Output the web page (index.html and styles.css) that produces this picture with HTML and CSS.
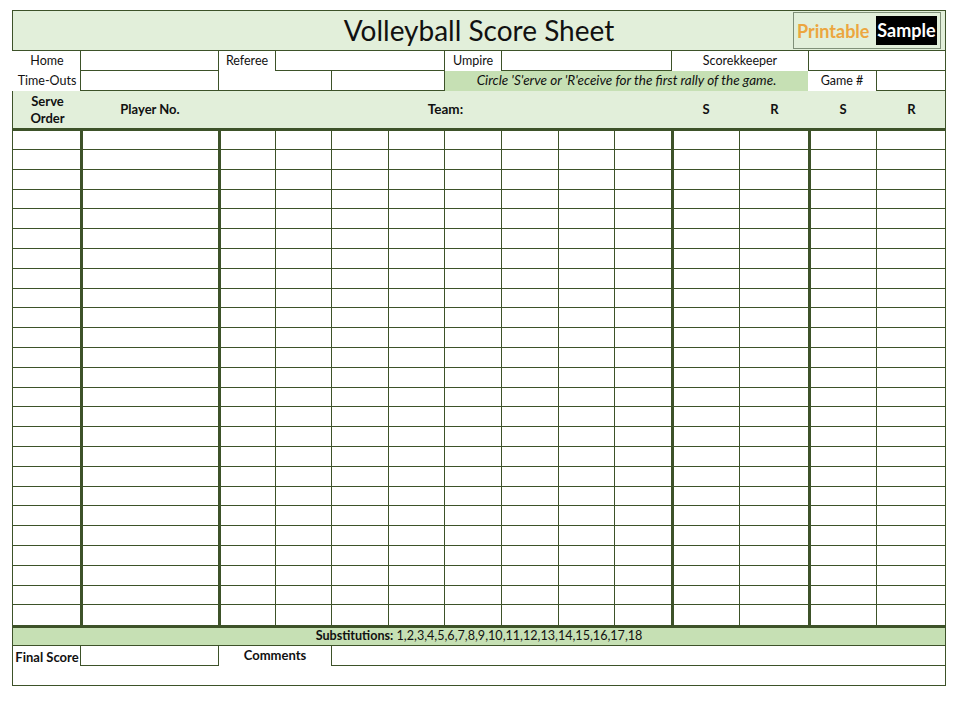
FILE: index.html
```html
<!DOCTYPE html>
<html lang="en">
<head>
<meta charset="utf-8">
<title>Volleyball Score Sheet</title>
<link rel="stylesheet" href="styles.css">
</head>
<body>
<main class="sheet">
  <header class="title">
    <h1>Volleyball Score Sheet</h1>
    <div class="logo"><span class="logo-a">Printable</span><span class="logo-b">Sample</span></div>
  </header>

  <section class="grid info">
    <div class="label first">Home</div><div class="box"></div>
    <div class="label lb">Referee</div><div class="box s3"></div>
    <div class="label lb">Umpire</div><div class="box s3"></div>
    <div class="label s2 lb">Scorekkeeper</div><div class="box s2"></div>
    <div class="label first">Time-Outs</div><div class="box"></div>
    <div class="box s2"></div><div class="box s2"></div>
    <div class="note s6">Circle 'S'erve or 'R'eceive for the first rally of the game.</div>
    <div class="label">Game #</div><div class="box"></div>
  </section>

  <section class="grid head">
    <div class="hc serve">Serve<br>Order</div>
    <div class="hc">Player No.</div>
    <div class="hc team s8">Team:</div>
    <div class="hc">S</div><div class="hc">R</div><div class="hc">S</div><div class="hc">R</div>
  </section>

  <section class="grid score">
    <!-- 25 rows x 14 columns -->
    <i></i><i></i><i></i><i></i><i></i><i></i><i></i><i></i><i></i><i></i><i></i><i></i><i></i><i></i>
    <i></i><i></i><i></i><i></i><i></i><i></i><i></i><i></i><i></i><i></i><i></i><i></i><i></i><i></i>
    <i></i><i></i><i></i><i></i><i></i><i></i><i></i><i></i><i></i><i></i><i></i><i></i><i></i><i></i>
    <i></i><i></i><i></i><i></i><i></i><i></i><i></i><i></i><i></i><i></i><i></i><i></i><i></i><i></i>
    <i></i><i></i><i></i><i></i><i></i><i></i><i></i><i></i><i></i><i></i><i></i><i></i><i></i><i></i>
    <i></i><i></i><i></i><i></i><i></i><i></i><i></i><i></i><i></i><i></i><i></i><i></i><i></i><i></i>
    <i></i><i></i><i></i><i></i><i></i><i></i><i></i><i></i><i></i><i></i><i></i><i></i><i></i><i></i>
    <i></i><i></i><i></i><i></i><i></i><i></i><i></i><i></i><i></i><i></i><i></i><i></i><i></i><i></i>
    <i></i><i></i><i></i><i></i><i></i><i></i><i></i><i></i><i></i><i></i><i></i><i></i><i></i><i></i>
    <i></i><i></i><i></i><i></i><i></i><i></i><i></i><i></i><i></i><i></i><i></i><i></i><i></i><i></i>
    <i></i><i></i><i></i><i></i><i></i><i></i><i></i><i></i><i></i><i></i><i></i><i></i><i></i><i></i>
    <i></i><i></i><i></i><i></i><i></i><i></i><i></i><i></i><i></i><i></i><i></i><i></i><i></i><i></i>
    <i></i><i></i><i></i><i></i><i></i><i></i><i></i><i></i><i></i><i></i><i></i><i></i><i></i><i></i>
    <i></i><i></i><i></i><i></i><i></i><i></i><i></i><i></i><i></i><i></i><i></i><i></i><i></i><i></i>
    <i></i><i></i><i></i><i></i><i></i><i></i><i></i><i></i><i></i><i></i><i></i><i></i><i></i><i></i>
    <i></i><i></i><i></i><i></i><i></i><i></i><i></i><i></i><i></i><i></i><i></i><i></i><i></i><i></i>
    <i></i><i></i><i></i><i></i><i></i><i></i><i></i><i></i><i></i><i></i><i></i><i></i><i></i><i></i>
    <i></i><i></i><i></i><i></i><i></i><i></i><i></i><i></i><i></i><i></i><i></i><i></i><i></i><i></i>
    <i></i><i></i><i></i><i></i><i></i><i></i><i></i><i></i><i></i><i></i><i></i><i></i><i></i><i></i>
    <i></i><i></i><i></i><i></i><i></i><i></i><i></i><i></i><i></i><i></i><i></i><i></i><i></i><i></i>
    <i></i><i></i><i></i><i></i><i></i><i></i><i></i><i></i><i></i><i></i><i></i><i></i><i></i><i></i>
    <i></i><i></i><i></i><i></i><i></i><i></i><i></i><i></i><i></i><i></i><i></i><i></i><i></i><i></i>
    <i></i><i></i><i></i><i></i><i></i><i></i><i></i><i></i><i></i><i></i><i></i><i></i><i></i><i></i>
    <i></i><i></i><i></i><i></i><i></i><i></i><i></i><i></i><i></i><i></i><i></i><i></i><i></i><i></i>
    <i></i><i></i><i></i><i></i><i></i><i></i><i></i><i></i><i></i><i></i><i></i><i></i><i></i><i></i>
  </section>

  <section class="subs"><b>Substitutions:</b> 1,2,3,4,5,6,7,8,9,10,11,12,13,14,15,16,17,18</section>

  <section class="grid foot">
    <div class="flabel">Final Score</div>
    <div class="box"></div>
    <div class="comments s2">Comments</div>
    <div class="box s10"></div>
  </section>
  <div class="last"></div>
</main>
</body>
</html>
```
FILE: styles.css
```css
:root {
  --line: #3d5229;
  --pale: #e2efda;
  --mid: #c6e0b4;
  --cols: 68px 138px 57px 56px 57px 56px 57px 57px 56px 57px 68px 69px 68px 69px;
}
* { box-sizing: border-box; }
html, body { margin: 0; background: #fff; }
body {
  padding: 10px 0 0 12px;
  font-family: Lato, "Liberation Sans", sans-serif;
  color: #111;
}
.sheet {
  width: 934px;
  font-size: 12.5px;
}
.grid {
  display: grid;
  grid-template-columns: var(--cols);
  border-right: 1px solid var(--line);
}
.s2 { grid-column: span 2; }
.s3 { grid-column: span 3; }
.s6 { grid-column: span 6; }
.s8 { grid-column: span 8; }
.s10 { grid-column: span 10; }

.title {
  position: relative;
  height: 41px;
  padding-bottom: 2px;
  background: var(--pale);
  border: 1px solid var(--line);
  display: flex;
  align-items: center;
  justify-content: center;
}
h1 {
  margin: 0;
  font-size: 28px;
  font-weight: 400;
  line-height: 36px;
}
.logo {
  position: absolute;
  top: 1px;
  right: 4px;
  width: 148px;
  height: 37px;
  border: 1px solid #7f8f78;
  background: var(--pale);
  display: flex;
  align-items: center;
  padding-left: 3px;
  font-size: 18px;
  font-weight: 700;
}
.logo-a { color: #eca63f; width: 79px; }
.logo-b {
  background: #000;
  color: #fff;
  width: 61px;
  height: 29px;
  line-height: 28px;
  text-align: center;
}

.label {
  height: 20px;
  padding-bottom: 2px;
  background: #fff;
  display: flex;
  align-items: center;
  justify-content: center;
}
.first { padding-left: 2px; }
.lb { border-left: 1px solid var(--line); }
.box {
  height: 20px;
  border-left: 1px solid var(--line);
  border-bottom: 1px solid var(--line);
  background: #fff;
}
.note {
  height: 20px;
  padding-bottom: 2px;
  background: var(--mid);
  border-left: 1px solid var(--line);
  font-size: 13.5px;
  font-style: italic;
  display: flex;
  align-items: center;
  justify-content: center;
}

.head {
  height: 40px;
  background: var(--pale);
  border-bottom: 3px solid var(--line);
  font-size: 13px;
  font-weight: 700;
}
.hc {
  display: flex;
  align-items: center;
  justify-content: center;
  padding-left: 2px;
  text-align: center;
  line-height: 17px;
}
.serve { border-left: 1px solid var(--line); }
.team { font-size: 13.5px; }

.score {
  grid-template-rows: 19px repeat(24, 19.8px);
}
.score i {
  display: block;
  border-left: 1px solid var(--line);
  border-bottom: 1px solid var(--line);
}
.score i:nth-child(14n+2),
.score i:nth-child(14n+3),
.score i:nth-child(14n+11),
.score i:nth-child(14n+13) { border-left: 3px solid var(--line); }
.score i:nth-last-child(-n+14) { border-bottom: 0; }

.subs {
  height: 21px;
  background: var(--mid);
  border: 1px solid var(--line);
  border-top: 3px solid var(--line);
  font-size: 12.6px;
  text-align: center;
  line-height: 16px;
}
.foot { height: 20px; }
.flabel, .comments {
  font-size: 13px;
  font-weight: 700;
  display: flex;
  align-items: center;
  justify-content: center;
}
.flabel { border-left: 1px solid var(--line); padding: 2px 0 0 1px; }
.comments { border-left: 1px solid var(--line); padding-bottom: 3px; }
.last {
  height: 20px;
  border: 1px solid var(--line);
  border-top: 0;
}
```
